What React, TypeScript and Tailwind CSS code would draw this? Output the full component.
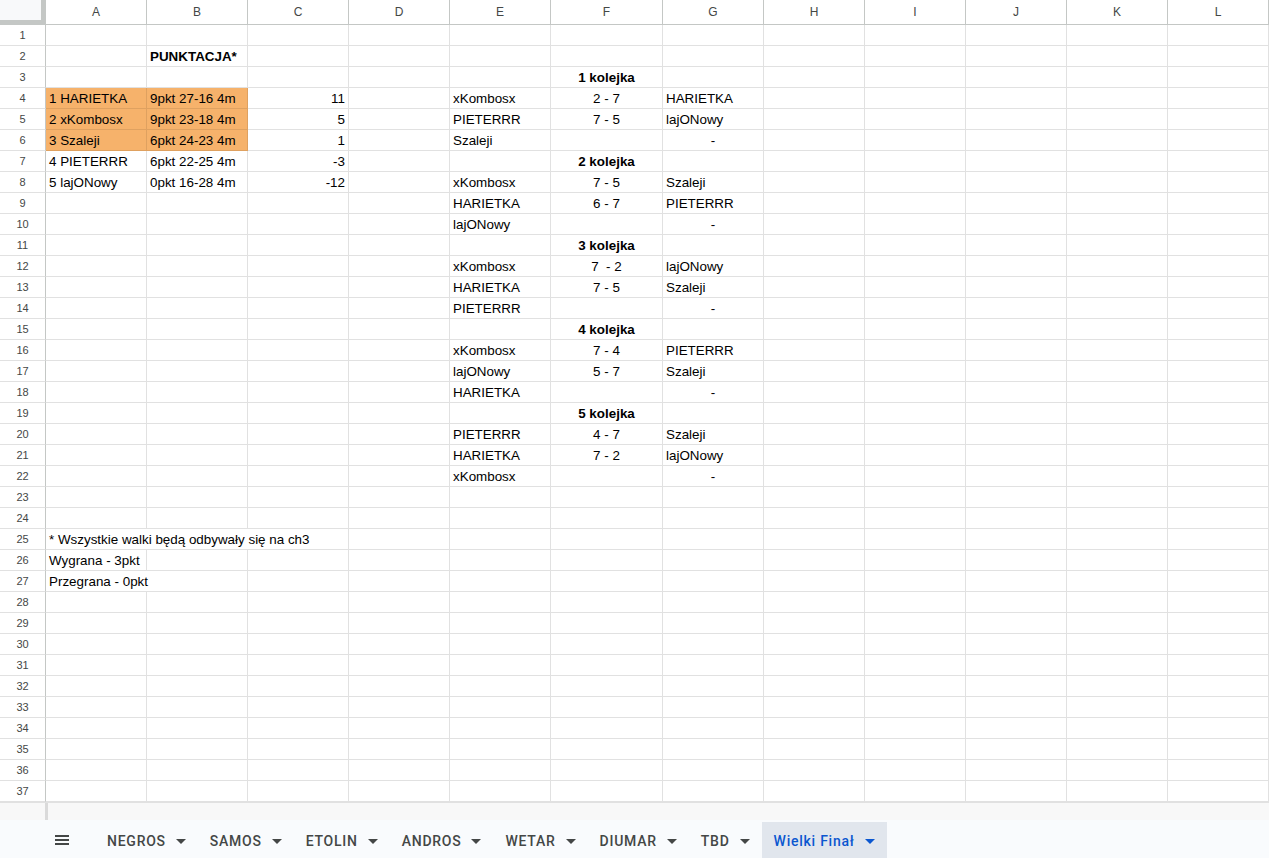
import React from "react";

type Cell = {
  t: string;
  align?: "left" | "center" | "right";
  bold?: boolean;
  fill?: boolean;
};

const COLS = ["A", "B", "C", "D", "E", "F", "G", "H", "I", "J", "K", "L"];
const ROWS = 37;

const cells: Record<string, Cell> = {};
const put = (ref: string, t: string, opts: Partial<Cell> = {}) => {
  cells[ref] = { t, ...opts };
};

// Standings table
put("B2", "PUNKTACJA*", { bold: true });
const standings: [string, string, string, boolean][] = [
  ["1 HARIETKA", "9pkt 27-16 4m", "11", true],
  ["2 xKombosx", "9pkt 23-18 4m", "5", true],
  ["3 Szaleji", "6pkt 24-23 4m", "1", true],
  ["4 PIETERRR", "6pkt 22-25 4m", "-3", false],
  ["5 lajONowy", "0pkt 16-28 4m", "-12", false],
];
standings.forEach(([a, b, c, fill], i) => {
  const r = 4 + i;
  put(`A${r}`, a, { fill });
  put(`B${r}`, b, { fill });
  put(`C${r}`, c, { align: "right" });
});

// Rounds schedule
const rounds: [string, [string, string, string][]][] = [
  ["1 kolejka", [["xKombosx", "2 - 7", "HARIETKA"], ["PIETERRR", "7 - 5", "lajONowy"], ["Szaleji", "", "-"]]],
  ["2 kolejka", [["xKombosx", "7 - 5", "Szaleji"], ["HARIETKA", "6 - 7", "PIETERRR"], ["lajONowy", "", "-"]]],
  ["3 kolejka", [["xKombosx", "7  - 2", "lajONowy"], ["HARIETKA", "7 - 5", "Szaleji"], ["PIETERRR", "", "-"]]],
  ["4 kolejka", [["xKombosx", "7 - 4", "PIETERRR"], ["lajONowy", "5 - 7", "Szaleji"], ["HARIETKA", "", "-"]]],
  ["5 kolejka", [["PIETERRR", "4 - 7", "Szaleji"], ["HARIETKA", "7 - 2", "lajONowy"], ["xKombosx", "", "-"]]],
];
rounds.forEach(([title, games], i) => {
  const r = 3 + i * 4;
  put(`F${r}`, title, { bold: true, align: "center" });
  games.forEach(([e, f, g], j) => {
    const rr = r + 1 + j;
    put(`E${rr}`, e);
    if (f) put(`F${rr}`, f, { align: "center" });
    put(`G${rr}`, g, g === "-" ? { align: "center" } : {});
  });
});

// Notes
put("A25", "* Wszystkie walki będą odbywały się na ch3");
put("A26", "Wygrana - 3pkt");
put("A27", "Przegrana - 0pkt");

// Cells whose right gridline is hidden by overflowing text
const noRightLine = new Set(["A25", "B25", "A27"]);

const TABS = ["NEGROS", "SAMOS", "ETOLIN", "ANDROS", "WETAR", "DIUMAR", "TBD", "Wielki Finał"];

function Caret({ active }: { active?: boolean }) {
  return (
    <svg width="10" height="5" viewBox="0 0 10 5" className="shrink-0">
      <polygon points="0,0 10,0 5,5" fill={active ? "#0b57d0" : "#444746"} />
    </svg>
  );
}

export default function App() {
  const rows = Array.from({ length: ROWS }, (_, i) => i + 1);
  return (
    <div className="w-[1269px] h-[858px] overflow-hidden bg-white flex flex-col font-['Liberation_Sans',Arial,sans-serif]">
      <div className="grid grid-cols-[46px_repeat(5,101px)_112px_repeat(6,101px)] grid-rows-[25px_repeat(37,21px)]">
        {/* corner */}
        <div className="bg-[#f8f9fa] border-r-[5px] border-b-[5px] border-[#c4c7c5]" />
        {COLS.map((c) => (
          <div
            key={c}
            className="flex items-center justify-center border-r border-b border-[#c4c7c5] text-[12px] text-[#444746] bg-white"
          >
            {c}
          </div>
        ))}
        {rows.map((r) => (
          <React.Fragment key={r}>
            <div className="flex items-center justify-center pt-[1px] border-r border-b border-[#c4c7c5] border-b-[#e1e1e1] text-[11px] text-[#444746] bg-white">
              {r}
            </div>
            {COLS.map((c) => {
              const ref = `${c}${r}`;
              const cell = cells[ref];
              const fill = cell?.fill;
              const hideR = noRightLine.has(ref);
              const align =
                cell?.align === "right"
                  ? "justify-end"
                  : cell?.align === "center"
                  ? "justify-center"
                  : "justify-start";
              return (
                <div
                  key={ref}
                  className={`relative flex items-center px-[3px] pt-[2px] border-b ${
                    hideR ? "" : "border-r"
                  } ${
                    fill ? "bg-[#f6b26b] border-[#dfa160]" : "border-[#e1e1e1]"
                  } ${align}`}
                >
                  {cell && (
                    <span
                      className={`relative z-10 whitespace-pre text-[13.4px] leading-none text-black ${
                        cell.bold ? "font-bold" : ""
                      }`}
                    >
                      {cell.t}
                    </span>
                  )}
                </div>
              );
            })}
          </React.Fragment>
        ))}
      </div>

      {/* horizontal scroll strip */}
      <div className="h-[18px] bg-[#f8f8f8] border-t border-[#e1e1e1] flex">
        <div className="w-[45px]" />
        <div className="w-[3px] bg-[#dadada]" />
      </div>

      {/* sheet tabs */}
      <div className="flex-1 bg-[#f9fbfd] flex items-end">
        <div className="h-[36px] flex items-center pl-[55px] pr-[26px]">
          <div className="flex flex-col gap-[2px] w-[14px]">
            <div className="h-[2px] bg-[#444746]" />
            <div className="h-[2px] bg-[#444746]" />
            <div className="h-[2px] bg-[#444746]" />
          </div>
        </div>
        {TABS.map((t, i) => {
          const active = i === TABS.length - 1;
          return (
            <div
              key={t}
              className={`h-[36px] flex items-center gap-[10px] px-[12px] pt-[2px] font-['Roboto',sans-serif] text-[14px] font-medium tracking-[0.75px] ${
                active ? "bg-[#e1e6ed] text-[#0b57d0]" : "text-[#444746]"
              }`}
            >
              <span>{t}</span>
              <Caret active={active} />
            </div>
          );
        })}
      </div>
    </div>
  );
}
